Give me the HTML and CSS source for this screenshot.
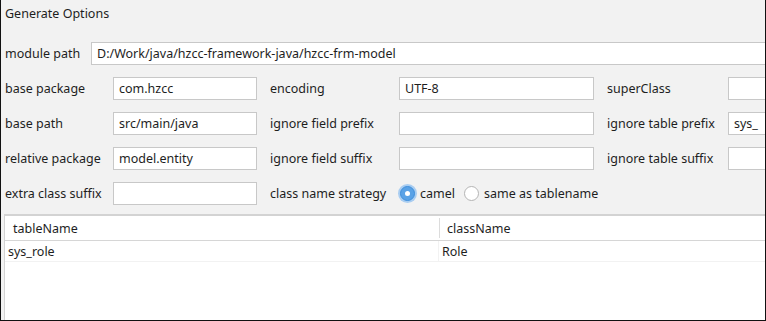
FILE: index.html
```html
<!DOCTYPE html>
<html lang="en">
<head>
  <meta charset="UTF-8" />
  <title>Generate Options</title>
  <link rel="stylesheet" href="styles.css">
</head>
<body>
  <div class="window">
    <div class="title">Generate Options</div>

    <div class="options">
      <div class="module-row">
        <label class="module-label">module path</label>
        <input class="field wide" type="text" value="D:/Work/java/hzcc-framework-java/hzcc-frm-model" />
      </div>

      <div class="grid">
        <label>base package</label>
        <input class="field" type="text" value="com.hzcc" />
        <label class="col2">encoding</label>
        <input class="field" type="text" value="UTF-8" />
        <label class="col3">superClass</label>
        <input class="field last" type="text" value="" />

        <label>base path</label>
        <input class="field" type="text" value="src/main/java" />
        <label class="col2">ignore field prefix</label>
        <input class="field" type="text" value="" />
        <label class="col3">ignore table prefix</label>
        <input class="field last" type="text" value="sys_" />

        <label>relative package</label>
        <input class="field" type="text" value="model.entity" />
        <label class="col2">ignore field suffix</label>
        <input class="field" type="text" value="" />
        <label class="col3">ignore table suffix</label>
        <input class="field last" type="text" value="" />

        <label>extra class suffix</label>
        <input class="field" type="text" value="" />
        <label class="col2">class name strategy</label>
        <div class="radios">
          <span class="radio checked"><span class="dot"></span></span>
          <span class="radio-text">camel</span>
          <span class="radio"></span>
          <span class="radio-text">same as tablename</span>
        </div>
      </div>
    </div>

    <div class="table">
      <div class="thead">
        <div class="cell name">tableName</div>
        <div class="cell cls">className</div>
      </div>
      <div class="row">
        <div class="cell name">sys_role</div>
        <div class="cell cls">Role</div>
      </div>
    </div>
  </div>
</body>
</html>
```

FILE: styles.css
```css
body {
  margin: 0;
  padding: 0;
  font-family: "Noto Sans", "Open Sans", sans-serif;
  font-size: 12.5px;
  color: #1e1e1e;
  background: #fff;
}
.window {
  width: 766px;
  height: 321px;
  box-sizing: border-box;
  border: 1px solid #111;
  border-top: none;
  background: #f2f2f2;
  overflow: hidden;
}
.title {
  padding: 5px 4px 0;
  line-height: 17px;
}
.options {
  padding: 20px 0 0 4px;
}
.module-row {
  display: flex;
  align-items: center;
  height: 23px;
}
.module-label {
  width: 86px;
  flex: none;
}
.field {
  box-sizing: border-box;
  height: 23px;
  margin: 0;
  border: 1px solid #c8c8c8;
  background: #fff;
  padding: 0 5px;
  font-family: inherit;
  font-size: 12.5px;
  color: #1e1e1e;
  outline: none;
  min-width: 0;
}
.wide {
  flex: none;
  width: 700px;
}
.grid {
  display: grid;
  grid-template-columns: 108px 144px 142px 195px 134px 60px;
  grid-auto-rows: 23px;
  row-gap: 12px;
  margin-top: 12px;
  align-items: center;
}
.grid .field {
  width: 100%;
}
.col2 {
  padding-left: 13px;
}
.col3 {
  padding-left: 13px;
}
.radios {
  grid-column: span 3;
  display: flex;
  align-items: center;
}
.radio {
  box-sizing: border-box;
  width: 15px;
  height: 15px;
  border-radius: 50%;
  border: 1px solid #b4b4b4;
  background: #fff;
  display: flex;
  align-items: center;
  justify-content: center;
  margin-left: 1px;
}
.radio.checked {
  border-color: #3f8fdc;
  background: #5aa2e6;
  box-shadow: 0 0 0 2px #a9cdf1;
}
.dot {
  width: 5px;
  height: 5px;
  border-radius: 50%;
  background: #fff;
}
.radio-text {
  margin-left: 5px;
  margin-right: 8px;
}
.table {
  margin: 9px 0 0 3px;
  width: 800px;
  height: 120px;
  background: #fff;
  border-top: 2px solid #d3d3d3;
  border-left: 1px solid #d3d3d3;
}
.thead {
  display: flex;
  height: 24px;
  border-bottom: 1px solid #d6d6d6;
}
.thead .name {
  width: 426px;
  padding-left: 8px;
  border-right: 1px solid #dcdcdc;
  margin: 2px 0;
  line-height: 22px;
}
.thead .cls {
  padding-left: 7px;
  line-height: 26px;
}
.row {
  display: flex;
  height: 20px;
  border-bottom: 1px solid #f2f2f2;
}
.row .cell {
  line-height: 22px;
}
.row .name {
  width: 430px;
  padding-left: 3px;
  border-right: 1px solid #f2f2f2;
}
.row .cls {
  padding-left: 3px;
}
```
